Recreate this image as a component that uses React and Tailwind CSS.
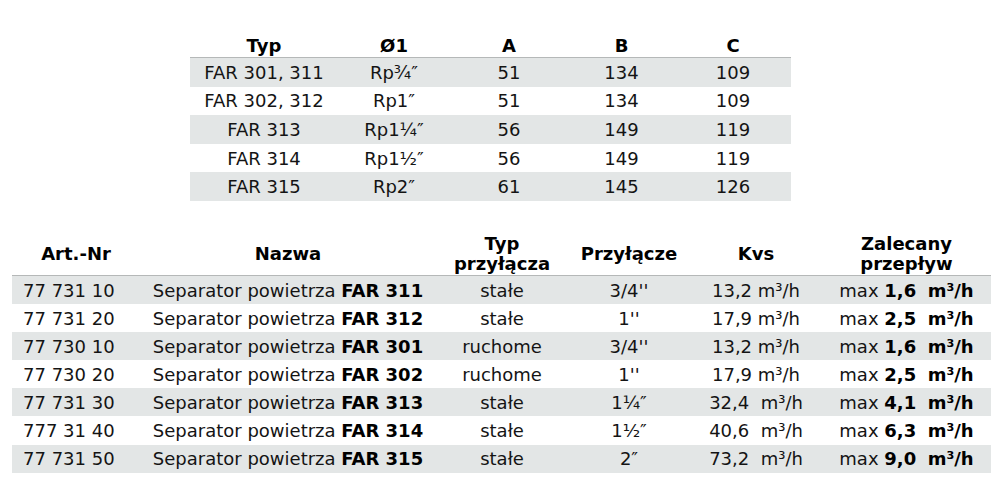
import React from "react";

const top = [
  ["FAR 301, 311", "Rp¾″", "51", "134", "109"],
  ["FAR 302, 312", "Rp1″", "51", "134", "109"],
  ["FAR 313", "Rp1¼″", "56", "149", "119"],
  ["FAR 314", "Rp1½″", "56", "149", "119"],
  ["FAR 315", "Rp2″", "61", "145", "126"],
];

const bottom = [
  ["77 731 10", "FAR 311", "stałe", "3/4''", "13,2 m³/h", "1,6"],
  ["77 731 20", "FAR 312", "stałe", "1''", "17,9 m³/h", "2,5"],
  ["77 730 10", "FAR 301", "ruchome", "3/4''", "13,2 m³/h", "1,6"],
  ["77 730 20", "FAR 302", "ruchome", "1''", "17,9 m³/h", "2,5"],
  ["77 731 30", "FAR 313", "stałe", "1¼″", "32,4\u00a0 m³/h", "4,1"],
  ["777 31 40", "FAR 314", "stałe", "1½″", "40,6\u00a0 m³/h", "6,3"],
  ["77 731 50", "FAR 315", "stałe", "2″", "73,2\u00a0 m³/h", "9,0"],
];

export default function App() {
  return (
    <div
      className="w-[997px] h-[485px] bg-white text-[#141414] text-[18px] overflow-hidden"
      style={{ fontFamily: '"DejaVu Sans", Verdana, sans-serif' }}
    >
      <div className="pt-[32px] pl-[190px]">
        <div className="w-[601px]">
          <div className="grid grid-cols-[148px_112px_118px_107px_116px] h-[26px] items-center font-bold text-black text-center border-b border-[#b5b8b8]">
            <div>Typ</div>
            <div>Ø1</div>
            <div>A</div>
            <div>B</div>
            <div>C</div>
          </div>
          {top.map((r, i) => (
            <div
              key={i}
              className={`grid grid-cols-[148px_112px_118px_107px_116px] h-[28.6px] items-center text-center ${
                i % 2 === 0 ? "bg-[#e3e6e6]" : "bg-white"
              }`}
            >
              {r.map((c, j) => (
                <div key={j} className="whitespace-nowrap">{c}</div>
              ))}
            </div>
          ))}
        </div>
      </div>

      <div className="pt-[32px] pl-[12px]">
        <div className="w-[979px]">
          <div className="grid grid-cols-[128px_296px_132px_122px_132px_1fr] h-[43px] items-center font-bold text-black text-center leading-[20px] border-b border-[#b5b8b8]">
            <div>Art.-Nr</div>
            <div>Nazwa</div>
            <div>
              Typ
              <br />
              przyłącza
            </div>
            <div>Przyłącze</div>
            <div>Kvs</div>
            <div>
              Zalecany
              <br />
              przepływ
            </div>
          </div>
          {bottom.map((r, i) => (
            <div
              key={i}
              className={`grid grid-cols-[128px_296px_132px_122px_132px_1fr] h-[28.1px] items-center text-center ${
                i % 2 === 0 ? "bg-[#e3e6e6]" : "bg-white"
              }`}
            >
              <div className="text-left pl-[11px]">{r[0]}</div>
              <div className="whitespace-nowrap">
                Separator powietrza <span className="font-bold text-black">{r[1]}</span>
              </div>
              <div>{r[2]}</div>
              <div>{r[3]}</div>
              <div className="whitespace-pre">{r[4]}</div>
              <div className="whitespace-pre">
                max <span className="font-bold text-black">{r[5]}</span>
                {"  "}
                <span className="font-bold text-black">m³/h</span>
              </div>
            </div>
          ))}
        </div>
      </div>
    </div>
  );
}
